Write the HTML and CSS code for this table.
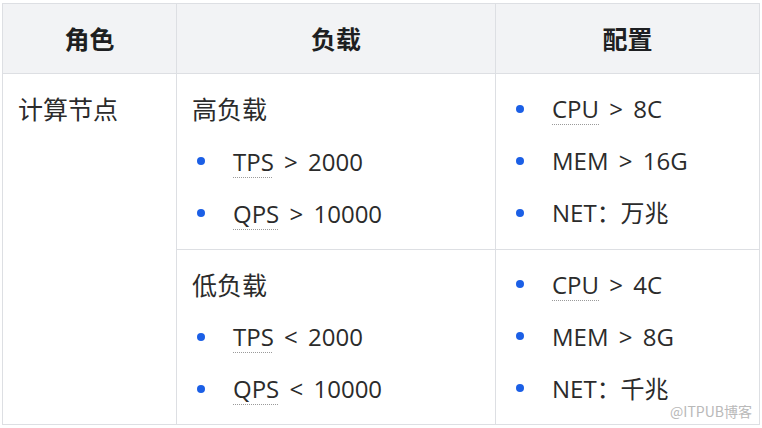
FILE: index.html
```html
<!DOCTYPE html>
<html lang="zh-CN">
<head>
<meta charset="utf-8">
<title>配置表</title>
<link rel="stylesheet" href="styles.css">
</head>
<body>
<div class="wrap">
  <table class="spec">
    <colgroup>
      <col class="c1">
      <col class="c2">
      <col class="c3">
    </colgroup>
    <thead>
      <tr><th>角色</th><th>负载</th><th>配置</th></tr>
    </thead>
    <tbody>
      <tr>
        <td rowspan="2"><p class="line">计算节点</p></td>
        <td>
          <p class="line">高负载</p>
          <ul class="list">
            <li><span><span class="term">TPS</span> &gt; 2000</span></li>
            <li><span><span class="term">QPS</span> &gt; 10000</span></li>
          </ul>
        </td>
        <td>
          <ul class="list">
            <li><span><span class="term">CPU</span> &gt; 8C</span></li>
            <li><span>MEM &gt; 16G</span></li>
            <li><span>NET：万兆</span></li>
          </ul>
        </td>
      </tr>
      <tr>
        <td>
          <p class="line">低负载</p>
          <ul class="list">
            <li><span><span class="term">TPS</span> &lt; 2000</span></li>
            <li><span><span class="term">QPS</span> &lt; 10000</span></li>
          </ul>
        </td>
        <td>
          <ul class="list">
            <li><span><span class="term">CPU</span> &gt; 4C</span></li>
            <li><span>MEM &gt; 8G</span></li>
            <li><span>NET：千兆</span></li>
          </ul>
        </td>
      </tr>
    </tbody>
  </table>
  <div class="mark">@ITPUB博客</div>
</div>
</body>
</html>
```

FILE: styles.css
```css
html, body {
  margin: 0;
  padding: 0;
  background: #ffffff;
}
body {
  font-family: "Open Sans", "Noto Sans CJK SC", sans-serif;
  color: #2b2b2b;
  font-size: 25px;
}
.wrap {
  position: relative;
  width: 762px;
  height: 428px;
  padding: 3px 0 0 2px;
  box-sizing: border-box;
}
.spec {
  border-collapse: collapse;
  width: 757px;
  table-layout: fixed;
}
.c1 { width: 174px; }
.c2 { width: 319px; }
.c3 { width: 264px; }
.spec th,
.spec td {
  border: 1px solid #dddfe3;
  padding: 16px 15px 17px;
  vertical-align: top;
  text-align: left;
  line-height: 37px;
}
.spec th {
  background: #f2f3f5;
  font-family: "Noto Sans CJK SC", sans-serif;
  font-weight: 700;
  color: #1e1f22;
  text-align: center;
  height: 70px;
  padding: 0;
  vertical-align: middle;
  box-sizing: border-box;
}
.line {
  margin: 0;
  font-family: "Noto Sans CJK SC", sans-serif;
}
.list {
  list-style: none;
  margin: 0;
  padding: 0;
  font-size: 24px;
  word-spacing: 4px;
}
.line + .list {
  margin-top: 15.5px;
}
.list li {
  display: flex;
  align-items: center;
  height: 37px;
}
.list li + li {
  margin-top: 15px;
}
.list li::before {
  content: "";
  flex: none;
  width: 8px;
  height: 8px;
  border-radius: 50%;
  background: #1b5fe6;
  margin-left: 5px;
  margin-right: 28px;
}
.term {
  text-decoration: underline dotted #9a9a9a;
  text-decoration-thickness: 1px;
  text-underline-offset: 6px;
}
.mark {
  position: absolute;
  right: 10px;
  bottom: 9px;
  font-family: "Noto Sans CJK SC", sans-serif;
  font-size: 14px;
  line-height: 16px;
  color: #b9b9b9;
}
```
